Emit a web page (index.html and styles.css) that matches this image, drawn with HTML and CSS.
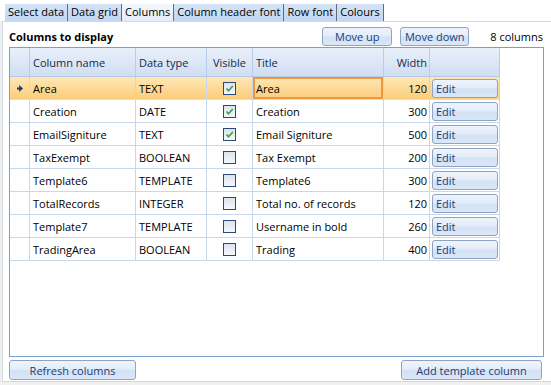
FILE: index.html
```html
<!DOCTYPE html>
<html lang="en">
<head>
  <meta charset="UTF-8" />
  <title>Grid settings - Columns</title>
  <link rel="stylesheet" href="styles.css">
</head>
<body>
  <div class="tabs">
    <div class="tab">Select data</div>
    <div class="tab">Data grid</div>
    <div class="tab active">Columns</div>
    <div class="tab">Column header font</div>
    <div class="tab">Row font</div>
    <div class="tab">Colours</div>
  </div>

  <div class="panel">
    <div class="toolbar">
      <h2>Columns to display</h2>
      <button class="btn move-up">Move up</button>
      <button class="btn move-down">Move down</button>
      <span class="count">8 columns</span>
    </div>

    <div class="grid">
      <div class="row head">
        <div class="cell"></div>
        <div class="cell">Column name</div>
        <div class="cell">Data type</div>
        <div class="cell center">Visible</div>
        <div class="cell">Title</div>
        <div class="cell right">Width</div>
        <div class="cell"></div>
      </div>

      <div class="row selected">
        <div class="cell center">
          <svg class="pointer" width="6" height="7" viewBox="0 0 6 7"><path d="M0 2.5h2.2V0L6 3.5 2.2 7V4.5H0z" fill="#1b3a6b"/></svg>
        </div>
        <div class="cell">Area</div>
        <div class="cell">TEXT</div>
        <div class="cell center"><span class="check on"><svg width="11" height="11" viewBox="0 0 11 11"><path d="M2.5 5.5l2 2.2L8.8 3" fill="none" stroke="#3aa542" stroke-width="1.7"/></svg></span></div>
        <div class="cell current">Area</div>
        <div class="cell right">120</div>
        <div class="cell edit"><button class="btn">Edit</button></div>
      </div>

      <div class="row">
        <div class="cell"></div>
        <div class="cell">Creation</div>
        <div class="cell">DATE</div>
        <div class="cell center"><span class="check on"><svg width="11" height="11" viewBox="0 0 11 11"><path d="M2.5 5.5l2 2.2L8.8 3" fill="none" stroke="#3aa542" stroke-width="1.7"/></svg></span></div>
        <div class="cell">Creation</div>
        <div class="cell right">300</div>
        <div class="cell edit"><button class="btn">Edit</button></div>
      </div>

      <div class="row">
        <div class="cell"></div>
        <div class="cell">EmailSigniture</div>
        <div class="cell">TEXT</div>
        <div class="cell center"><span class="check on"><svg width="11" height="11" viewBox="0 0 11 11"><path d="M2.5 5.5l2 2.2L8.8 3" fill="none" stroke="#3aa542" stroke-width="1.7"/></svg></span></div>
        <div class="cell">Email Signiture</div>
        <div class="cell right">500</div>
        <div class="cell edit"><button class="btn">Edit</button></div>
      </div>

      <div class="row">
        <div class="cell"></div>
        <div class="cell">TaxExempt</div>
        <div class="cell">BOOLEAN</div>
        <div class="cell center"><span class="check"></span></div>
        <div class="cell">Tax Exempt</div>
        <div class="cell right">200</div>
        <div class="cell edit"><button class="btn">Edit</button></div>
      </div>

      <div class="row">
        <div class="cell"></div>
        <div class="cell">Template6</div>
        <div class="cell">TEMPLATE</div>
        <div class="cell center"><span class="check"></span></div>
        <div class="cell">Template6</div>
        <div class="cell right">300</div>
        <div class="cell edit"><button class="btn">Edit</button></div>
      </div>

      <div class="row">
        <div class="cell"></div>
        <div class="cell">TotalRecords</div>
        <div class="cell">INTEGER</div>
        <div class="cell center"><span class="check"></span></div>
        <div class="cell">Total no. of records</div>
        <div class="cell right">120</div>
        <div class="cell edit"><button class="btn">Edit</button></div>
      </div>

      <div class="row">
        <div class="cell"></div>
        <div class="cell">Template7</div>
        <div class="cell">TEMPLATE</div>
        <div class="cell center"><span class="check"></span></div>
        <div class="cell">Username in bold</div>
        <div class="cell right">260</div>
        <div class="cell edit"><button class="btn">Edit</button></div>
      </div>

      <div class="row">
        <div class="cell"></div>
        <div class="cell">TradingArea</div>
        <div class="cell">BOOLEAN</div>
        <div class="cell center"><span class="check"></span></div>
        <div class="cell">Trading</div>
        <div class="cell right">400</div>
        <div class="cell edit"><button class="btn">Edit</button></div>
      </div>
    </div>

    <div class="footer">
      <button class="btn refresh">Refresh columns</button>
      <button class="btn add">Add template column</button>
    </div>
  </div>
</body>
</html>
```

FILE: styles.css
```css
body {
  margin: 0;
  width: 551px;
  height: 385px;
  overflow: hidden;
  background: #f0f0f0;
  font-family: "Open Sans", "Liberation Sans", sans-serif;
  font-size: 11px;
  color: #000;
}
.tabs {
  display: flex;
  height: 21px;
  padding: 4px 0 0 5px;
  box-sizing: border-box;
  background: #fff;
}
.tab {
  height: 17px;
  line-height: 16px;
  padding: 0 3px;
  background: linear-gradient(#d4e3f6, #c3d7f1);
  border-right: 1px solid #5f6c7c;
}
.tab.active {
  background: linear-gradient(#f3f7fc, #e4edf9);
}
.panel {
  display: flex;
  flex-direction: column;
  height: 361px;
  margin-left: 2px;
  padding: 0 7px 0 6px;
  box-sizing: border-box;
  background: #fff;
  border: 1px solid #d3d9e0;
  border-right: none;
}
.toolbar {
  display: flex;
  align-items: center;
  height: 25px;
  padding-top: 4px;
  box-sizing: border-box;
}
.toolbar h2 {
  margin: 0;
  font-size: 11px;
  font-weight: bold;
}
.btn {
  height: 19px;
  padding: 0;
  font-family: inherit;
  font-size: 11px;
  color: #213d78;
  border: 1px solid #8fa4c2;
  border-radius: 3px;
  background: linear-gradient(#eef4fc 0%, #e2ecf9 48%, #d2e1f4 52%, #dbe7f7 100%);
}
.move-up {
  width: 70px;
  margin-left: auto;
}
.move-down {
  width: 69px;
  margin-left: 8px;
}
.count {
  margin-left: 21px;
  margin-right: 1px;
}
.grid {
  height: 310px;
  border: 1px solid #7a9ed0;
  box-sizing: border-box;
  background: #fff;
  overflow: hidden;
}
.row {
  display: grid;
  grid-template-columns: 20px 106px 71px 46px 131px 46px 70px;
  height: 23px;
}
.cell {
  display: flex;
  align-items: center;
  padding: 0 3px;
  box-sizing: border-box;
  white-space: nowrap;
  overflow: hidden;
  border-right: 1px solid #c8d7eb;
  border-bottom: 1px solid #c8d7eb;
}
.cell.center {
  justify-content: center;
  padding: 0;
}
.cell.right {
  justify-content: flex-end;
  padding-right: 2px;
}
.head {
  height: 29px;
}
.head .cell {
  color: #17294a;
  background: linear-gradient(#e9f0fa, #d0def2);
  border-right-color: #b9cde8;
  border-bottom-color: #b4c9e6;
}
.selected .cell {
  background: linear-gradient(#fee7b6, #fbcd7a);
  border-bottom-color: #f6dca0;
}
.selected .cell.current {
  box-shadow: inset 0 0 0 2px #f1963a;
}
.cell.edit {
  padding: 1px 1px 1px 2px;
}
.cell.edit .btn {
  width: 100%;
  text-align: left;
  padding-left: 3px;
}
.check {
  display: flex;
  align-items: center;
  justify-content: center;
  width: 13px;
  height: 13px;
  box-sizing: border-box;
  border: 1px solid #2a4a7a;
  background: linear-gradient(#dde4ee, #f4f7fb);
}
.footer {
  display: flex;
  justify-content: space-between;
  margin-top: 3px;
}
.footer .btn {
  height: 20px;
}
.refresh {
  width: 127px;
}
.add {
  width: 141px;
  margin-right: 2px;
}
```
